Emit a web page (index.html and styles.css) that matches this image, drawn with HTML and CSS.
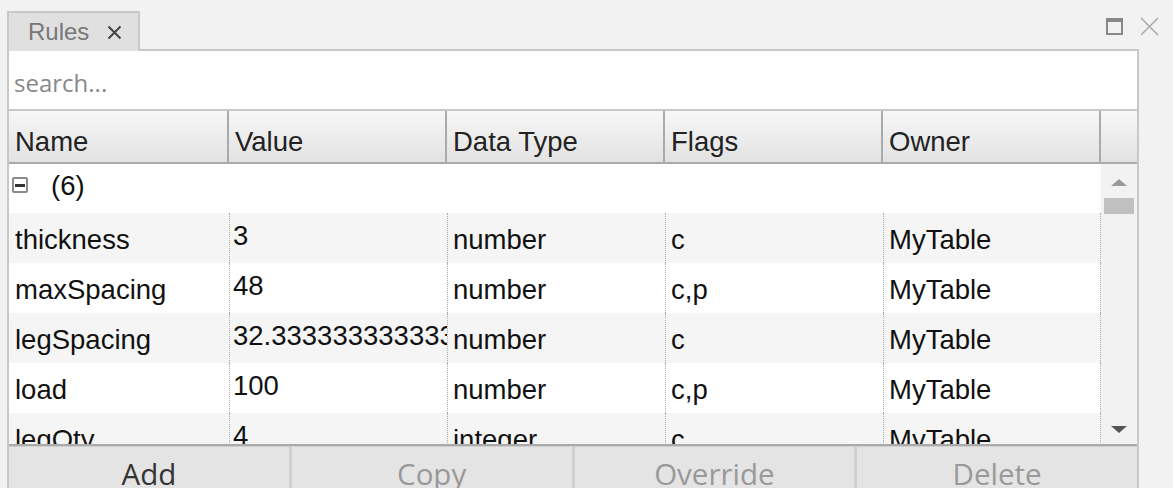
FILE: index.html
```html
<!DOCTYPE html>
<html>
<head>
<meta charset="utf-8">
<link rel="stylesheet" href="styles.css">
</head>
<body>
<div class="topbar">
  <div class="tab"><span class="tab-label">Rules</span><svg class="tab-close" width="15" height="15" viewBox="0 0 15 15"><path d="M1.5 1.5L13.5 13.5M13.5 1.5L1.5 13.5" stroke="#444" stroke-width="2" fill="none"/></svg></div>
  <div class="win-icons">
    <span class="win-max"></span>
    <svg class="win-close" width="19" height="19" viewBox="0 0 19 19"><path d="M1 1L18 18M18 1L1 18" stroke="#aaa" stroke-width="1.6" fill="none"/></svg>
  </div>
</div>
<div class="panel">
  <div class="search"><span class="placeholder">search...</span></div>
  <div class="head">
    <div class="hc c1">Name</div>
    <div class="hc">Value</div>
    <div class="hc">Data Type</div>
    <div class="hc">Flags</div>
    <div class="hc">Owner</div>
    <div class="hc last"></div>
  </div>
  <div class="body">
    <div class="rows">
      <div class="group"><span class="minus"><span></span></span><span class="count">(6)</span></div>
      <div class="row alt"><div class="c c1">thickness</div><div class="c v"><span class="clip">3</span></div><div class="c">number</div><div class="c">c</div><div class="c">MyTable</div></div>
      <div class="row"><div class="c c1">maxSpacing</div><div class="c v"><span class="clip">48</span></div><div class="c">number</div><div class="c">c,p</div><div class="c">MyTable</div></div>
      <div class="row alt"><div class="c c1">legSpacing</div><div class="c v"><span class="clip">32.3333333333333</span></div><div class="c">number</div><div class="c">c</div><div class="c">MyTable</div></div>
      <div class="row"><div class="c c1">load</div><div class="c v"><span class="clip">100</span></div><div class="c">number</div><div class="c">c,p</div><div class="c">MyTable</div></div>
      <div class="row alt"><div class="c c1">legQty</div><div class="c v"><span class="clip">4</span></div><div class="c">integer</div><div class="c">c</div><div class="c">MyTable</div></div>
    </div>
    <div class="scroll">
      <span class="arrow-up"></span>
      <span class="thumb"></span>
      <span class="spacer"></span>
      <span class="arrow-down"></span>
    </div>
  </div>
  <div class="buttons">
    <div class="btn">Add</div>
    <div class="btn dis">Copy</div>
    <div class="btn dis">Override</div>
    <div class="btn dis">Delete</div>
  </div>
</div>
</body>
</html>
```

FILE: styles.css
```css
html, body {
  margin: 0;
  padding: 0;
  height: 100%;
  overflow: hidden;
}
body {
  background: #f2f2f2;
  font-family: "Liberation Sans", Arial, sans-serif;
}
.topbar {
  height: 49px;
  display: flex;
  justify-content: space-between;
  align-items: flex-start;
  padding-left: 7px;
}
.tab {
  margin-top: 11px;
  width: 129px;
  height: 38px;
  background: #e0e0e0;
  border: 2px solid #c8c8c8;
  border-bottom: none;
  display: flex;
  align-items: center;
  box-sizing: content-box;
}
.tab-label {
  margin-left: 19px;
  font-size: 24px;
  color: #777;
}
.tab-close {
  margin-left: 18px;
  display: block;
}
.win-icons {
  display: flex;
  align-items: center;
  gap: 17px;
  margin-top: 17px;
  margin-right: 14px;
}
.win-max {
  width: 13px;
  height: 11px;
  border: 2px solid #888;
  border-top-width: 4px;
  display: block;
}
.win-close { display: block; }
.panel {
  margin-left: 7px;
  width: 1128px;
  border: 2px solid #c8c8c8;
  border-bottom: none;
  border-top: none;
}
.search {
  height: 58px;
  background: #fff;
  border-top: 2px solid #c8c8c8;
  border-bottom: 2px solid #c8c8c8;
  display: flex;
  align-items: center;
}
.placeholder {
  font-family: "Open Sans", sans-serif;
  font-size: 24px;
  color: #888;
  margin-left: 5px;
  margin-top: 4px;
}
.head {
  display: grid;
  grid-template-columns: 220px 218px 218px 218px 218px 1fr;
  height: 51px;
  background: linear-gradient(#f7f7f7, #e2e2e2);
  border-bottom: 2px solid #aaa;
}
.hc {
  border-right: 2px solid #aaa;
  font-size: 27.5px;
  color: #222;
  padding-left: 6px;
  display: flex;
  align-items: center;
  padding-top: 10px;
}
.hc.last { border-right: none; }
.body {
  display: flex;
  height: 280px;
  overflow: hidden;
  border-bottom: 2px solid #aaa;
}
.rows {
  width: 1092px;
  overflow: hidden;
}
.group {
  height: 49px;
  background: #fff;
  display: flex;
  align-items: center;
}
.minus {
  width: 12px;
  height: 12px;
  border: 2px solid #8a8a8a;
  border-radius: 2px;
  margin-left: 3px;
  margin-top: -7px;
  display: flex;
  align-items: center;
  justify-content: center;
}
.minus span {
  width: 10px;
  height: 3px;
  background: #333;
}
.count {
  font-size: 27.5px;
  color: #111;
  margin-left: 23px;
  margin-top: -6px;
}
.row {
  height: 50px;
  display: grid;
  grid-template-columns: 220px 218px 218px 218px 218px;
  background: #fff;
}
.row.alt { background: #f5f5f5; }
.c {
  border-left: 1px dotted #aaa;
  font-size: 27.5px;
  color: #111;
  padding-left: 5px;
  display: flex;
  align-items: center;
  padding-top: 4px;
  white-space: nowrap;
  overflow: hidden;
}
.c.c1 { border-left: none; padding-left: 6px; }
.c.v { padding-left: 3px; padding-top: 0; padding-bottom: 4px; }
.clip { display: block; overflow: hidden; max-width: 100%; white-space: nowrap; }
.c:last-child { border-right: 1px dotted #aaa; }
.scroll {
  flex: 1;
  background: #f2f2f2;
  display: flex;
  flex-direction: column;
  align-items: center;
}
.arrow-up {
  margin-top: 15px;
  width: 0;
  height: 0;
  border-left: 8px solid transparent;
  border-right: 8px solid transparent;
  border-bottom: 7px solid #999;
}
.thumb {
  margin-top: 12px;
  width: 30px;
  height: 16px;
  background: #c0c0c0;
}
.spacer { flex: 1; }
.arrow-down {
  margin-bottom: 11px;
  width: 0;
  height: 0;
  border-left: 8px solid transparent;
  border-right: 8px solid transparent;
  border-top: 7px solid #555;
}
.buttons {
  display: grid;
  grid-template-columns: repeat(4, 1fr);
  gap: 3px;
  background: #d0d0d0;
  padding-top: 1px;
}
.btn {
  height: 52px;
  background: #e4e4e4;
  display: flex;
  align-items: center;
  justify-content: center;
  font-family: "Open Sans", sans-serif;
  font-size: 29.5px;
  color: #333;
}
.btn.dis { color: #999; }
```
